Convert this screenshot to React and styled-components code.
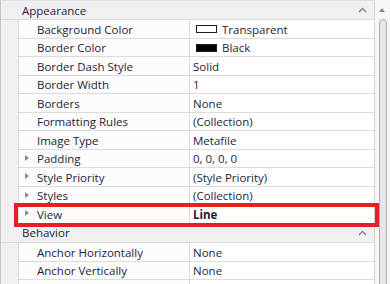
import React from 'react';
import styled, { createGlobalStyle } from 'styled-components';

const GlobalStyle = createGlobalStyle`
  html, body {
    margin: 0;
    padding: 0;
    background: #ffffff;
  }
  body {
    font-family: "Open Sans", "Noto Sans", sans-serif;
    font-size: 11.5px;
  }
`;

const Frame = styled.div`
  position: relative;
  display: flex;
  width: 390px;
  height: 284px;
  overflow: hidden;
  background: #ffffff;
`;

const Grid = styled.div`
  flex: 1;
  border-left: 1px solid #c6c6c8;
  border-right: 1px solid #d4d4d8;
  border-top: 1px solid #e2e2e6;
  background: #f0f0f3;
  color: #1d1d3a;
`;

const Category = styled.div`
  display: flex;
  align-items: center;
  justify-content: space-between;
  height: ${(p) => (p.$first ? '19px' : '19.5px')};
  padding: 0 7px 0 21px;
  border-bottom: 1px solid #dcdce0;
  box-sizing: border-box;
  background: #f0f0f3;
`;

const Row = styled.div`
  display: flex;
  height: 18.5px;
`;

const Gutter = styled.div`
  width: 17px;
  flex: none;
  background: #f0f0f3;
`;

const Cell = styled.div`
  display: flex;
  align-items: center;
  box-sizing: border-box;
  border-bottom: 1px solid #dcdce0;
  border-left: 1px solid #dcdce0;
  background: #ffffff;
  white-space: nowrap;
  padding-top: 1px;
`;

const NameCell = styled(Cell)`
  position: relative;
  width: 171px;
  flex: none;
  padding-left: 18px;
  background: #fcfcfd;
`;

const ValueCell = styled(Cell)`
  flex: 1;
  padding-left: 3px;
  font-weight: ${(p) => (p.$bold ? 700 : 400)};
`;

const Expander = styled.span`
  position: absolute;
  left: 6px;
  top: 50%;
  margin-top: -3.5px;
  width: 0;
  height: 0;
  border-top: 3.5px solid transparent;
  border-bottom: 3.5px solid transparent;
  border-left: 4px solid #8c8c90;
`;

const Swatch = styled.span`
  display: inline-block;
  width: 19px;
  height: 6px;
  margin: 0 5px 0 3px;
  border: 1px solid #1d1d2a;
  background: ${(p) => p.$color};
`;

const Scrollbar = styled.div`
  position: relative;
  width: 15px;
  flex: none;
  background: #f7f7f8;
`;

const ArrowUp = styled.span`
  position: absolute;
  left: 4px;
  top: 8px;
  width: 0;
  height: 0;
  border-left: 3.5px solid transparent;
  border-right: 3.5px solid transparent;
  border-bottom: 4px solid #8a8a90;
`;

const Thumb = styled.div`
  position: absolute;
  left: 4px;
  top: 19px;
  width: 6px;
  height: 300px;
  border: 1px solid #aeaeb4;
  border-radius: 4px;
  background: #e6e6ea;
`;

const Highlight = styled.div`
  position: absolute;
  left: 14px;
  top: 203px;
  width: 365px;
  height: 24px;
  box-sizing: border-box;
  border: 4px solid #ec1c24;
  pointer-events: none;
`;

const Chevron = () => (
  <svg width="9" height="6" viewBox="0 0 9 6">
    <polyline points="1,5 4.5,1.5 8,5" fill="none" stroke="#7e7e84" strokeWidth="1.3" />
  </svg>
);

const appearance = [
  { name: 'Background Color', value: 'Transparent', swatch: '#ffffff' },
  { name: 'Border Color', value: 'Black', swatch: '#000000' },
  { name: 'Border Dash Style', value: 'Solid' },
  { name: 'Border Width', value: '1' },
  { name: 'Borders', value: 'None' },
  { name: 'Formatting Rules', value: '(Collection)' },
  { name: 'Image Type', value: 'Metafile' },
  { name: 'Padding', value: '0, 0, 0, 0', expandable: true },
  { name: 'Style Priority', value: '(Style Priority)', expandable: true },
  { name: 'Styles', value: '(Collection)', expandable: true },
  { name: 'View', value: 'Line', expandable: true, bold: true },
];

const behavior = [
  { name: 'Anchor Horizontally', value: 'None' },
  { name: 'Anchor Vertically', value: 'None' },
  { name: '', value: '' },
];

const PropRow = ({ item }) => (
  <Row>
    <Gutter />
    <NameCell>
      {item.expandable && <Expander />}
      {item.name}
    </NameCell>
    <ValueCell $bold={item.bold}>
      {item.swatch && <Swatch $color={item.swatch} />}
      {item.value}
    </ValueCell>
  </Row>
);

const App = () => {
  return (
    <Frame>
      <GlobalStyle />
      <Grid>
        <Category $first>
          <span>Appearance</span>
          <Chevron />
        </Category>
        {appearance.map((item) => (
          <PropRow key={item.name} item={item} />
        ))}
        <Category>
          <span>Behavior</span>
          <Chevron />
        </Category>
        {behavior.map((item, i) => (
          <PropRow key={i} item={item} />
        ))}
      </Grid>
      <Scrollbar>
        <ArrowUp />
        <Thumb />
      </Scrollbar>
      <Highlight />
    </Frame>
  );
};

export default App;
